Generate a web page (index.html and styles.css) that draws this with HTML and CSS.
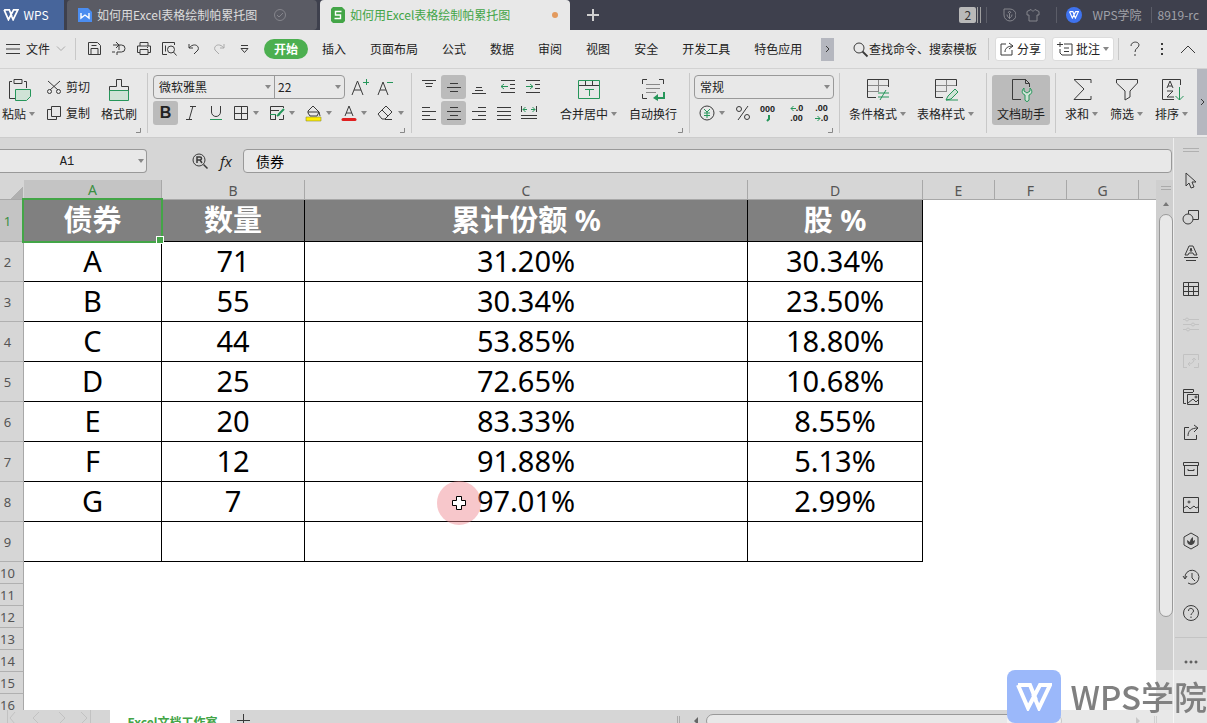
FILE: index.html
```
<!DOCTYPE html>
<html lang="zh-CN">
<head>
    <meta charset="UTF-8">
    <meta name="viewport" content="width=device-width, initial-scale=1.0">
    <title>如何用Excel表格绘制帕累托图</title>
    <link rel="stylesheet" href="styles.css">
</head>
<body>
    <svg class="sprite" aria-hidden="true">
        <symbol id="wps" viewBox="0 0 36 28">
            <path d="M2 2h12l6 15M2 2l10 23 12-23h10L23 25 17 11" />
        </symbol>
        <symbol id="corner" viewBox="0 0 5 5"><path d="M4.500 0v4.500H0" /></symbol>
    </svg>

    <div class="app">
        <header class="titlebar">
            <button class="home"><svg class="logo" width="16" height="12"><use href="#wps" /></svg>WPS</button>
            <button class="doc">
                <svg width="14" height="16" viewBox="0 0 14 16"><path d="M0 1h10l4 4v10H0z" fill="#4b8df0" stroke="none" /><path d="M3 6v5l4-3 4 3V6" fill="none" stroke="#fff" stroke-width="1.400" /></svg>
                <span>如何用Excel表格绘制帕累托图</span>
                <svg class="check" width="14" height="14" viewBox="0 0 14 14"><circle cx="7" cy="7" r="5.500" /><path d="M4 7l2 2 4-4" /></svg>
            </button>
            <button class="doc active">
                <svg width="14" height="16" viewBox="0 0 14 16"><path d="M2 0h9l3 3v11l-2 2H2l-2-2V2z" fill="#43a547" stroke="none" /><path d="M10.500 4.500h-6v3.500h5v3.500h-6" fill="none" stroke="#fff" stroke-width="1.400" /></svg>
                <span>如何用Excel表格绘制帕累托图</span>
                <i class="dot"></i>
            </button>
            <button class="new" aria-label="新建"><svg width="12" height="12" viewBox="0 0 12 12"><path d="M6 0v12M0 6h12" /></svg></button>
            <div class="account">
                <span class="count">2</span>
                <span class="stack"></span>
                <i class="line"></i>
                <svg class="gap-a" width="13" height="14" viewBox="0 0 13 14"><path d="M1 7V1h6a6 6 0 0 1 0 12 6 6 0 0 1-6-6M6.500 11V5M4 6.500c0 3 2.500 3 2.500 4 0-1 2.500-1 2.500-4M5 5l1.500-2L8 5" /></svg>
                <svg class="gap-b" width="14" height="14" viewBox="0 0 14 14"><path d="M5 1.500c1 2 3 2 4 0l4 2v3.500h-2v6H3V7H1V3.500z" /></svg>
                <i class="line"></i>
                <span class="avatar"><svg class="logo" width="10" height="8"><use href="#wps" /></svg></span>
                <span class="user">WPS学院</span>
                <i class="line"></i>
                <span class="version">8919-rc</span>
            </div>
        </header>

        <nav class="menubar">
            <button class="file"><svg width="14" height="12" viewBox="0 0 14 12"><path d="M0 1.500h14M0 6h14M0 10.500h14" /></svg><span>文件</span><svg class="pale" width="10" height="6" viewBox="0 0 10 6"><path d="M1 .5l4 4 4-4" /></svg></button>
            <i class="line"></i>
            <div class="quick">
                <button aria-label="保存"><svg width="16" height="16" viewBox="0 0 16 16"><path d="M2.500 1.500h9l3 3v9h-12zM5 13.500v-6h7v6M5.500 4.500h5" /></svg></button>
                <button aria-label="输出"><svg width="16" height="16" viewBox="0 0 16 16"><path d="M5 1l3 3-3 3M2 4h8.500a3.500 3.500 0 0 1 0 7H6v3M1 11h3M8 4v5" /></svg></button>
                <button aria-label="打印"><svg width="16" height="16" viewBox="0 0 16 16"><path d="M4 5V1.500h8V5M4 11.500H1.500V5h13v6.500H12M4 8.500h8v5H4zM11 6.500h1" /></svg></button>
                <button aria-label="预览"><svg width="16" height="16" viewBox="0 0 16 16"><path d="M6 13.500H1.500v-12h12V4M4.500 4.500v6" /><circle cx="10" cy="8.500" r="3.500" /><path d="M12.500 11l3 3.500" /></svg></button>
                <button aria-label="撤销"><svg width="16" height="16" viewBox="0 0 16 16"><path d="M3 3v4h4M3 7c5-6 11-2 9 2l-4 4" /></svg></button>
                <button aria-label="恢复"><svg class="pale" width="16" height="16" viewBox="0 0 16 16"><path d="M13 3v4H9M13 7C8 1 2 5 4 9l4 4" /></svg></button>
                <button aria-label="更多"><svg width="16" height="16" viewBox="0 0 16 16"><path d="M5 4.500h7M5 7.500l3.500 4L12 7.500z" /></svg></button>
            </div>
            <div class="tabs">
                <button class="current">开始</button>
                <button>插入</button>
                <button>页面布局</button>
                <button>公式</button>
                <button>数据</button>
                <button>审阅</button>
                <button>视图</button>
                <button>安全</button>
                <button>开发工具</button>
                <button>特色应用</button>
            </div>
            <button class="more" aria-label="更多选项卡"><svg width="5" height="8" viewBox="0 0 5 8"><path d="M1 1l3 3-3 3" /></svg></button>
            <div class="tools">
                <button class="find"><svg width="17" height="17" viewBox="0 0 17 17"><circle cx="7" cy="7" r="5" /><path d="M10.500 10.500l5 5" stroke-width="1.800" /></svg>查找命令、搜索模板</button>
                <i class="line"></i>
                <button class="box"><svg width="14" height="14" viewBox="0 0 14 14"><path d="M6 2H1v11h11V8M9 1l4 3-4 3M13 4C8 4 5 6 5 10" /></svg>分享</button>
                <button class="box"><svg width="16" height="14" viewBox="0 0 16 14"><path d="M7 2h8v11H5l-2-2V7M3 0v5M0 2.500h6M7 6h5M7 9.500h5" /></svg>批注<i class="caret"></i></button>
                <i class="line"></i>
                <button class="help" aria-label="帮助"><svg width="12" height="16" viewBox="0 0 12 16"><path d="M2 5c0-5 8-5 8-1 0 3-4 3-4 7M6 13v2" /></svg></button>
                <button class="dots" aria-label="菜单"><svg width="4" height="14" viewBox="0 0 4 14"><path d="M1 2h2M1 7h2M1 12h2" stroke-width="2" /></svg></button>
                <button class="fold" aria-label="收起"><svg width="16" height="9" viewBox="0 0 16 9"><path d="M1 8l7-7 7 7" /></svg></button>
            </div>
        </nav>

        <section class="ribbon">
            <div class="group clipboard">
                <button class="big paste"><svg width="24" height="24" viewBox="0 0 24 24"><path d="M5 3.500H2.500v17H8M17 3.500h2.500V10M7 1.500h8v4H7z" /><path class="green tint" d="M8.500 11.500h15v7l-4 4h-11z" /></svg><span>粘贴<i class="caret"></i></span></button>
                <div class="stackcol">
                    <button><svg width="16" height="16" viewBox="0 0 16 16"><path d="M2 2l10 9M14 2L4 11" /><circle cx="3.500" cy="12.500" r="2" /><circle cx="12.500" cy="12.500" r="2" /></svg>剪切</button>
                    <button><svg width="16" height="16" viewBox="0 0 16 16"><path d="M5.500 1.500h9v10h-9zM5 4.500H1.500v10h9V12" /></svg>复制</button>
                </div>
                <button class="big"><svg width="24" height="24" viewBox="0 0 24 24"><path class="green tint" d="M2.500 12.500h19v10h-19z" /><path d="M2.500 12.500v-4h7v-7h5v7h7v4" /></svg><span>格式刷</span></button>
                <svg class="corner" width="5" height="5"><use href="#corner" /></svg>
            </div>
            <div class="group font">
                <div class="row">
                    <div class="combo">
                        <span class="pick family"><select aria-label="字体"><option>微软雅黑</option></select><i class="caret"></i></span>
                        <span class="pick size"><select aria-label="字号"><option>22</option></select><i class="caret"></i></span>
                    </div>
                    <button class="ib" aria-label="增大字号"><svg width="20" height="18" viewBox="0 0 20 18"><path d="M2 17L7.500 3 13 17M4 12h7" /><path class="green" d="M13 4.500h6M16.500 1v6" /></svg></button>
                    <button class="ib" aria-label="减小字号"><svg width="20" height="18" viewBox="0 0 20 18"><path d="M3 17L8 4l5 13M5 12h6" /><path class="green" d="M12 4.500h6" /></svg></button>
                </div>
                <div class="row">
                    <button class="ib on" aria-label="加粗"><b>B</b></button>
                    <button class="ib" aria-label="倾斜"><svg width="12" height="16" viewBox="0 0 12 16"><path d="M5 1.500h6M1 14.500h6M8 1L4 15" /></svg></button>
                    <button class="ib" aria-label="下划线"><svg width="14" height="16" viewBox="0 0 14 16"><path d="M2.500 1v6a4.500 4.500 0 0 0 9 0V1" /><path class="green" d="M1 14.500h12" /></svg></button>
                    <button class="ic" aria-label="边框"><svg width="16" height="16" viewBox="0 0 16 16"><path d="M1.500 1.500h13v13h-13zM8.500 1v14M1 8.500h14" /></svg><i class="caret"></i></button>
                    <button class="ic" aria-label="样式"><svg width="16" height="16" viewBox="0 0 16 16"><path d="M14.500 3V1.500h-13v13H7M1 5.500h9M6.500 10v4M10 14.500h4.500V10" /><path class="green" d="M1 9.500h6" /><path class="green" d="M9 10l6-6M8 11l3-2" stroke-width="2" /></svg><i class="caret"></i></button>
                    <button class="ic" aria-label="填充颜色"><svg width="17" height="17" viewBox="0 0 17 17"><path d="M3 6l5-5 6 6-2 4H5L3 8zM3 7h11l1 4" /><path d="M1 12h15v4H1z" fill="#ffee00" stroke="#8b8b35" stroke-width=".6" /></svg><i class="caret"></i></button>
                    <button class="ic" aria-label="字体颜色"><svg width="16" height="17" viewBox="0 0 16 17"><path d="M4 11L8 1l4 10M5 8h6" /><path d="M2 14.500h12" stroke="#e02020" stroke-width="3" stroke-linecap="round" /></svg><i class="caret"></i></button>
                    <button class="ic" aria-label="清除"><svg width="17" height="16" viewBox="0 0 17 16"><path d="M1 9l8-8 6 6-7 7H5zM5 5l6 6M8 14.500h7" /></svg><i class="caret"></i></button>
                </div>
                <svg class="corner" width="5" height="5"><use href="#corner" /></svg>
            </div>
            <div class="group align">
                <div class="cols">
                    <div class="row">
                        <button class="ib" aria-label="顶端对齐"><svg width="16" height="16" viewBox="0 0 16 16"><path d="M1 1.500h14M4 4.500h8M5 7.500h6" /></svg></button>
                        <button class="ib on" aria-label="垂直居中"><svg width="16" height="16" viewBox="0 0 16 16"><path d="M4 4.500h8M1 8.500h14M4 12.500h8" /></svg></button>
                        <button class="ib" aria-label="底端对齐"><svg width="16" height="16" viewBox="0 0 16 16"><path d="M5 8.500h6M4 11.500h8M1 14.500h14" /></svg></button>
                        <button class="ib wide" aria-label="减少缩进"><svg width="16" height="16" viewBox="0 0 16 16"><path d="M1 1.500h14M10 5.500h5M10 9.500h5M1 13.500h14" /><path class="green" d="M8 7.500H1M4 5L1 7.500 4 10" /></svg></button>
                        <button class="ib" aria-label="增加缩进"><svg width="16" height="16" viewBox="0 0 16 16"><path d="M1 1.500h14M10 5.500h5M10 9.500h5M1 13.500h14" /><path class="green" d="M1 7.500h7M5 5l3 2.500L5 10" /></svg></button>
                    </div>
                    <div class="row">
                        <button class="ib" aria-label="左对齐"><svg width="16" height="16" viewBox="0 0 16 16"><path d="M1 2.500h8M1 6.500h14M1 10.500h8M1 14.500h14" /></svg></button>
                        <button class="ib on" aria-label="居中"><svg width="16" height="16" viewBox="0 0 16 16"><path d="M4 2.500h8M1 6.500h14M4 10.500h8M1 14.500h14" /></svg></button>
                        <button class="ib" aria-label="右对齐"><svg width="16" height="16" viewBox="0 0 16 16"><path d="M7 2.500h8M1 6.500h14M7 10.500h8M1 14.500h14" /></svg></button>
                        <button class="ib" aria-label="两端对齐"><svg width="16" height="16" viewBox="0 0 16 16"><path d="M1 2.500h14M1 6.500h14M1 10.500h14M1 14.500h14" /></svg></button>
                        <button class="ib" aria-label="分散对齐"><svg width="18" height="16" viewBox="0 0 18 16"><path d="M1.500 1v6M16.500 1v6M1 10.500h16M1 13.500h16" /><path class="green" d="M3 4.500h4M5.500 2L3 4.500 5.500 7M11 4.500h4M12.500 2L15 4.500 12.500 7" /></svg></button>
                    </div>
                </div>
                <button class="big"><svg width="24" height="24" viewBox="0 0 24 24"><path class="green" d="M1.500 2.500h21v18h-21zM8 11.500h9M12.500 12v6" /><path d="M2 7.500h20M8.500 3v4M15.500 3v4" /></svg><span>合并居中<i class="caret"></i></span></button>
                <button class="big"><svg width="24" height="24" viewBox="0 0 24 24"><path d="M1.500 6V1.500H6M18 1.500h4.500V6M1.500 16v4.500H6" /><path class="grey" d="M5 6.500h14M5 10.500h14M5 14.500h10" /><path class="green" d="M23 14v6h-8" stroke-width="2" /><path d="M17 16v7l-5-3z" fill="#26965a" stroke="none" /></svg><span>自动换行</span></button>
                <svg class="corner" width="5" height="5"><use href="#corner" /></svg>
            </div>
            <div class="group number">
                <div class="row">
                    <div class="combo"><span class="pick"><select aria-label="数字格式"><option>常规</option></select><i class="caret"></i></span></div>
                </div>
                <div class="row">
                    <button class="ic" aria-label="货币"><svg width="16" height="16" viewBox="0 0 16 16"><circle cx="8" cy="8" r="7" /><path class="green" d="M5 4l3 3 3-3M5 8h6M5 10.500h6M8 7v6" /></svg><i class="caret"></i></button>
                    <button class="ib" aria-label="百分比"><svg width="16" height="16" viewBox="0 0 16 16"><circle cx="4" cy="4" r="2.500" /><circle cx="12" cy="12" r="2.500" /><path d="M13 1L3 15" /></svg></button>
                    <button class="ib digits" aria-label="千位分隔"><span>000</span><svg width="6" height="7" viewBox="0 0 6 7"><path class="green" d="M4 0v4L2 6" stroke-width="2" /></svg></button>
                    <button class="ib digits wide"><span><svg width="6" height="7" viewBox="0 0 6 7"><path class="green" d="M6 3.500H1M3.500 1L1 3.500 3.500 6" /></svg>.0</span><span>.00</span></button>
                    <button class="ib digits"><span>.00</span><span><svg width="6" height="7" viewBox="0 0 6 7"><path class="green" d="M0 3.500h5M2.500 1L5 3.500 2.500 6" /></svg>.0</span></button>
                </div>
                <svg class="corner" width="5" height="5"><use href="#corner" /></svg>
            </div>
            <div class="group styles">
                <button class="big"><svg width="24" height="24" viewBox="0 0 24 24"><path d="M10 19.500H1.500v-18h21V9" /><path d="M2 7.500h20M12.500 2v11M2 13.500h11" class="grey" /><path class="green" d="M12 15h11M12 19h11M20 12l-6 10" /></svg><span>条件格式<i class="caret"></i></span></button>
                <button class="big"><svg width="24" height="24" viewBox="0 0 24 24"><path d="M9 19.500H1.500v-18h21V8" /><path d="M2 7.500h20M12.500 2v11M2 13.500h11" class="grey" /><path class="green tint" d="M12 22l2-4 7-7 3 3-7 7z" /><path class="green" d="M12 22h12" /></svg><span>表格样式<i class="caret"></i></span></button>
            </div>
            <div class="group helper">
                <button class="big on"><svg width="24" height="24" viewBox="0 0 24 24"><path d="M12 21.500H3.500v-20h13l4 4V9M16.500 1v4.500h4" /><path class="green tint" d="M15 10v3l3 2 3-2v-3c3 3 2 6-1 7v5c-1 2-3 2-4 0v-5c-3-1-4-4-1-7z" /></svg><span>文档助手</span></button>
            </div>
            <div class="group edit">
                <button class="big"><svg width="24" height="24" viewBox="0 0 24 24"><path d="M21 5V1.500H4L14 11 4 21.500h17V18" /></svg><span>求和<i class="caret"></i></span></button>
                <button class="big"><svg width="24" height="24" viewBox="0 0 24 24"><path d="M1.500 1.500h21V5L15 13v6l-5 3v-9L1.500 5z" /></svg><span>筛选<i class="caret"></i></span></button>
                <button class="big"><svg width="24" height="24" viewBox="0 0 24 24"><path d="M14 21.500H2.500v-20h18V7M7 10l3-7 3 7M8 8h4M7 13h6l-6 6h7" /><path class="green" d="M19.500 9v13M15.500 18l4 4 4-4" /></svg><span>排序<i class="caret"></i></span></button>
            </div>
            <button class="scroll" aria-label="向右滚动"><svg width="5" height="8" viewBox="0 0 5 8"><path d="M1 1l3 3-3 3" /></svg></button>
        </section>

        <div class="work">
            <main class="book">
                <div class="formulabar">
                    <div class="namebox"><input type="text" value="A1" aria-label="名称框"><i class="caret"></i></div>
                    <button class="lens" aria-label="查找"><svg width="17" height="17" viewBox="0 0 17 17"><circle cx="7" cy="7" r="6" /><path d="M5 10V4h3a1.500 1.500 0 0 1 0 3H5M8 7l2 3M11.500 11.500l4 4" stroke-width="1.500" /></svg></button>
                    <button class="fx">fx</button>
                    <input class="formula" type="text" value="债券" aria-label="编辑栏">
                </div>
                <div class="grid">
                    <div class="sheet">
                        <table>
                            <colgroup><col class="c-num"><col class="c-a"><col class="c-b"><col class="c-c"><col class="c-d"><col class="c-e"><col class="c-e"><col class="c-e"><col></colgroup>
                            <thead>
                                <tr><th class="all"></th><th class="sel">A</th><th>B</th><th>C</th><th>D</th><th>E</th><th>F</th><th>G</th><th></th></tr>
                            </thead>
                            <tbody>
                                <tr class="title"><th class="sel">1</th><td class="cursor">债券</td><td>数量</td><td>累计份额 %</td><td>股 %</td></tr>
                                <tr class="data"><th>2</th><td>A</td><td>71</td><td>31.20%</td><td>30.34%</td></tr>
                                <tr class="data"><th>3</th><td>B</td><td>55</td><td>30.34%</td><td>23.50%</td></tr>
                                <tr class="data"><th>4</th><td>C</td><td>44</td><td>53.85%</td><td>18.80%</td></tr>
                                <tr class="data"><th>5</th><td>D</td><td>25</td><td>72.65%</td><td>10.68%</td></tr>
                                <tr class="data"><th>6</th><td>E</td><td>20</td><td>83.33%</td><td>8.55%</td></tr>
                                <tr class="data"><th>7</th><td>F</td><td>12</td><td>91.88%</td><td>5.13%</td></tr>
                                <tr class="data"><th>8</th><td>G</td><td>7</td><td class="pointed">97.01%<span class="pointer"><svg width="16" height="16" viewBox="0 0 16 16"><path d="M5.500 1.500h5v4h4v5h-4v4h-5v-4h-4v-5h4z" /></svg></span></td><td>2.99%</td></tr>
                                <tr class="data"><th>9</th><td></td><td></td><td></td><td></td></tr>
                                <tr><th>10</th></tr>
                                <tr><th>11</th></tr>
                                <tr><th>12</th></tr>
                                <tr><th>13</th></tr>
                                <tr><th>14</th></tr>
                                <tr><th>15</th></tr>
                                <tr><th>16</th></tr>
                            </tbody>
                        </table>
                    </div>
                    <div class="vscroll">
                        <i class="split"></i>
                        <i class="up"></i>
                        <i class="thumb"></i>
                    </div>
                </div>
                <footer class="sheetbar">
                    <div class="pager"><svg width="92" height="14" viewBox="0 0 92 14"><path d="M7.500 0v14M15 2l-5 6 5 6M39 2l-6 6 6 6M59 2l6 6-6 6M81 2l6 6-6 6M90.500 0v14" /></svg></div>
                    <button class="sheettab">Excel文档工作室</button>
                    <button class="add" aria-label="新建工作表"><svg width="13" height="13" viewBox="0 0 13 13"><path d="M6.500 0v13M0 6.500h13" /></svg></button>
                    <div class="hscroll"><i class="grip"></i><i class="left"></i><i class="bar"></i><i class="right"></i><i class="grip"></i></div>
                </footer>
            </main>

            <aside class="side">
                <i class="handle"></i>
                <button aria-label="选择"><svg width="18" height="18" viewBox="0 0 18 18"><path d="M4 1v13l3-3 2 5 3-1-2-5h4z" /></svg></button>
                <button aria-label="形状"><svg width="18" height="18" viewBox="0 0 18 18"><circle cx="6" cy="11" r="5" /><path d="M6.500 6V2.500h10v9H11" /></svg></button>
                <button aria-label="艺术字"><svg width="18" height="18" viewBox="0 0 18 18"><path d="M3 11L7 2h4l4 9h-3l-1-2H7l-1 2zM8 7l1-3 1 3zM2 13.500h14M4 16.500h10" /></svg></button>
                <button aria-label="表格"><svg width="18" height="18" viewBox="0 0 18 18"><path d="M1.500 2.500h15v13h-15zM1 6.500h16M1 11.500h16M6.500 2v14M11.500 7v9" /></svg></button>
                <button class="off" aria-label="属性"><svg width="18" height="18" viewBox="0 0 18 18"><path d="M1 3.500h2M7 3.500h10M1 8.500h8M13 8.500h4M1 13.500h3M8 13.500h9" /><circle cx="5" cy="3.500" r="1.500" /><circle cx="11" cy="8.500" r="1.500" /><circle cx="6" cy="13.500" r="1.500" /></svg></button>
                <button class="off" aria-label="分析"><svg width="18" height="18" viewBox="0 0 18 18"><path d="M1.500 16V2.500h15V8M6 12c4 0 6-2 6-5M10 8l2-2 2 2M8 10l-2 2 2 2M12 15.500h4.500V11M1 15.500h4" /></svg></button>
                <button aria-label="图片库"><svg width="18" height="18" viewBox="0 0 18 18"><path d="M4 15.500H1.500v-14h10V4M1 4.500h10M5.500 6.500h11v10h-11zM6 15l5-4 3 3 2-2" /><circle cx="14" cy="9" r="1" /></svg></button>
                <button aria-label="分享"><svg width="18" height="18" viewBox="0 0 18 18"><path d="M7 3.500H2.500v12h12V11M12 1l4 3-4 4M16 4C9 4 6 7 6 12" /></svg></button>
                <button aria-label="归档"><svg width="18" height="18" viewBox="0 0 18 18"><path d="M1.500 2.500h15v3h-15zM2.500 6v9.500h13V6M6 9v1.500h6V9" /></svg></button>
                <button aria-label="图片"><svg width="18" height="18" viewBox="0 0 18 18"><path d="M1.500 1.500h15v15h-15zM2 12l3-2 3 3 4-3 2 2 2-1" /><circle cx="7" cy="6" r="1" /></svg></button>
                <button aria-label="云文档"><svg width="18" height="18" viewBox="0 0 18 18"><path d="M9 1l7 4v8l-7 4-7-4V5z" /><path d="M8.500 13C6 12.500 5 11 5 8l3 2c0-2 1-4 3-5v4l2-1c0 3-2 5-4.500 5z" fill="#444" stroke="none" /></svg></button>
                <button aria-label="历史"><svg width="18" height="18" viewBox="0 0 18 18"><path d="M3 10a7 7 0 1 1 3 5M1 8l2 3 2-3M10 5v5l3 3" /></svg></button>
                <button aria-label="帮助"><svg width="18" height="18" viewBox="0 0 18 18"><circle cx="9" cy="9" r="7.500" /><path d="M6.500 7c0-4 5-3 5 0 0 2-2.500 2-2.500 4M9 12.500V14" /></svg></button>
                <button class="last" aria-label="更多"><svg width="14" height="4" viewBox="0 0 14 4"><circle cx="2" cy="2" r="1" /><circle cx="7" cy="2" r="1" /><circle cx="12" cy="2" r="1" /></svg></button>
            </aside>
        </div>
    </div>

    <div class="watermark"><span class="mark"><svg class="logo" width="36" height="28"><use href="#wps" /></svg></span>WPS学院</div>
</body>
</html>
```
FILE: styles.css
```
:root {
    --bar: #e8e8e8;
    --panel: #d6d6d6;
    --pressed: #bbbbbb;
    --line: #c8c8c8;
    --border: #999999;
    --text: #222222;
    --green: #43a547;
    --icon-green: #26965a;
}

* {
    box-sizing: border-box;
    margin: 0;
    padding: 0;
}

body {
    font-family: "Noto Sans CJK SC", sans-serif;
    font-size: 12px;
    line-height: 16px;
    color: var(--text);
    overflow: hidden;
}

button, input, select {
    font: inherit;
    color: inherit;
    background: none;
    border: none;
    border-radius: 0;
    outline: none;
}

button {
    display: flex;
    align-items: center;
    justify-content: center;
    flex: none;
    white-space: nowrap;
}

svg {
    display: block;
    flex: none;
    fill: none;
    stroke: #3a3a3a;
}

.sprite {
    position: absolute;
    width: 0;
    height: 0;
}

.logo {
    stroke: #ffffff;
    stroke-width: 4;
}

.green { stroke: var(--icon-green); }
.tint { fill: #cfe3d6; }
.grey { stroke: #888888; }
.pale { stroke: #aaaaaa; }

.caret {
    flex: none;
    border: 3px solid transparent;
    border-top: 4px solid #888888;
    border-bottom: 0;
}

.line {
    flex: none;
    width: 1px;
    height: 22px;
    background: var(--line);
}

.app {
    display: flex;
    flex-direction: column;
    height: 100vh;
    background: var(--panel);
}

/* title bar */
.titlebar {
    display: flex;
    flex: none;
    height: 30px;
    background: #3e404d;
    color: #dddddd;
}

.home {
    width: 64px;
    gap: 4px;
    padding-right: 12px;
    background: #47659b;
    color: #ffffff;
}

.doc {
    width: 250px;
    margin-left: 3px;
    padding: 0 12px 0 11px;
    gap: 5px;
    justify-content: flex-start;
    background: #5a5b64;
    border-radius: 4px 4px 4px 0;
}

.doc.active {
    background: var(--bar);
    color: var(--green);
    border-radius: 4px 4px 0 0;
}

.check {
    margin-left: 11px;
    stroke: #85858c;
}

.dot {
    width: 6px;
    height: 6px;
    margin-left: auto;
    border-radius: 50%;
    background: #e39a5e;
}

.new {
    width: 46px;
}

.new svg {
    stroke: #d0d0d0;
    stroke-width: 2;
}

.account {
    display: flex;
    align-items: center;
    margin-left: auto;
    padding-right: 8px;
    color: #a0a1a8;
}

.account svg { stroke: #85868d; }
.account .logo { stroke: #ffffff; }
.account .line { height: 16px; background: #5b5d68; }

.count {
    width: 17px;
    border-radius: 2px;
    background: #b9b9b9;
    color: #333333;
    text-align: center;
}

.stack {
    width: 4px;
    height: 16px;
    margin: 0 5px 0 1px;
    border: solid #a0a0a0;
    border-width: 0 1px;
}

.gap-a { margin: 0 10px 0 16px; }
.gap-b { margin-right: 16px; }

.avatar {
    display: grid;
    place-items: center;
    width: 16px;
    height: 16px;
    margin: 0 10px 0 9px;
    border-radius: 50%;
    background: #3f73ee;
}

.user { margin-right: 9px; }
.version { margin-left: 6px; }

/* menu bar */
.menubar {
    display: flex;
    flex: none;
    align-items: center;
    height: 39px;
    padding-left: 6px;
    background: var(--bar);
    border-bottom: 1px solid #d2d2d2;
}

.file {
    gap: 6px;
    margin-right: 9px;
}

.quick {
    display: flex;
    margin-left: 5px;
}

.quick button {
    width: 25px;
    height: 24px;
}

.tabs {
    display: flex;
    margin-left: 6px;
}

.tabs button {
    height: 20px;
    padding: 0 12px;
}

.tabs .current {
    margin: 0 2px;
    padding: 0 10px;
    border-radius: 10px;
    background: #4caf50;
    color: #ffffff;
    font-weight: bold;
}

.more {
    width: 13px;
    height: 23px;
    margin-left: 7px;
    background: #b5b7bf;
}

.tools {
    display: flex;
    align-items: center;
    margin-left: auto;
    padding-right: 11px;
}

.find { margin-right: 11px; }

.box {
    height: 24px;
    margin-left: 6px;
    padding: 0 4px;
    gap: 3px;
    border: 1px solid #dcdcdc;
    border-radius: 3px;
    background: #ffffff;
}

.box + .line { margin-left: 4px; }
.help { width: 32px; }
.dots { width: 22px; }
.fold { margin-left: 7px; }

/* ribbon */
.ribbon {
    display: flex;
    flex: none;
    height: 68px;
    background: var(--bar);
}

.group {
    position: relative;
    display: flex;
    flex: none;
    padding: 6px 5px 0 5px;
}

.group + .group::before {
    content: "";
    position: absolute;
    left: 0;
    top: 4px;
    width: 1px;
    height: 60px;
    background: var(--line);
}

.corner {
    position: absolute;
    right: 6px;
    bottom: 4px;
    stroke: #888888;
}

.big {
    flex-direction: column;
    gap: 4px;
    height: 50px;
    border-radius: 3px;
}

.big span {
    display: flex;
    align-items: center;
    gap: 3px;
}

.on {
    background: var(--pressed);
    border-radius: 3px;
}

.row {
    display: flex;
    align-items: center;
    height: 24px;
}

.ib {
    width: 25px;
    height: 24px;
}

.ic {
    width: 36px;
    height: 24px;
    gap: 4px;
}

.ib b {
    font-family: "Liberation Sans", sans-serif;
    font-size: 16px;
}

.ib.wide { margin-left: 4px; }

.clipboard {
    width: 147px;
    padding-left: 2px;
    gap: 11px;
}

.stackcol {
    display: grid;
    align-content: start;
    gap: 2px;
}

.stackcol button {
    height: 24px;
    gap: 4px;
}

.font, .number, .cols {
    display: flex;
    flex-direction: column;
    gap: 2px;
}

.font {
    width: 264px;
    padding-left: 6px;
}

.combo {
    display: flex;
    height: 24px;
    margin-right: 2px;
    border: 1px solid var(--border);
    border-radius: 4px;
}

.pick {
    display: flex;
    align-items: center;
    flex: 1;
    padding-right: 3px;
}

.pick select {
    flex: 1;
    min-width: 0;
    height: 100%;
    padding-left: 5px;
    appearance: none;
}

.family {
    flex: none;
    width: 121px;
    border-right: 1px solid var(--border);
}

.size {
    flex: none;
    width: 69px;
}

.size select { padding-left: 3px; }

.align {
    width: 278px;
    gap: 12px;
}

.align .row .ib:last-child { margin-right: 3px; }
.number { width: 150px; }
.number .combo { width: 140px; margin: 0; }

.digits {
    flex-direction: column;
    gap: 1px;
    font-family: "Liberation Sans", sans-serif;
    font-size: 9px;
    line-height: 9px;
    font-weight: bold;
}

.digits span {
    display: flex;
    align-items: center;
}

.styles {
    width: 147px;
    padding-left: 10px;
    gap: 11px;
}

.helper { width: 69px; padding-left: 6px; }
.helper .big { width: 58px; }

.edit {
    padding-left: 10px;
    gap: 12px;
}

.scroll {
    width: 10px;
    height: 66px;
    margin-left: auto;
    background: #b5b7bf;
}

/* workbook */
.work {
    display: flex;
    flex: 1;
    min-height: 0;
    border-top: 1px solid #cccccc;
}

.book {
    display: flex;
    flex: 1;
    flex-direction: column;
    min-width: 0;
}

.formulabar {
    display: flex;
    flex: none;
    align-items: center;
    height: 42px;
    padding: 4px 1px 0 0;
}

.namebox {
    display: flex;
    align-items: center;
    width: 147px;
    height: 24px;
    padding-right: 2px;
    border: 1px solid var(--border);
    border-left: 0;
    border-radius: 0 4px 4px 0;
    background: var(--bar);
}

.namebox input {
    flex: 1;
    min-width: 0;
    padding: 2px 4px 0 0;
    text-align: center;
    font-family: "Liberation Mono", monospace;
}

.lens { margin-left: 45px; }

.fx {
    width: 34px;
    font-family: "Open Sans", sans-serif;
    font-size: 15px;
    font-style: italic;
}

.formula {
    flex: 1;
    min-width: 0;
    height: 24px;
    padding-left: 12px;
    border: 1px solid var(--border);
    border-radius: 4px;
    background: var(--bar);
    color: #000000;
    font-size: 14px;
}

.grid {
    display: flex;
    flex: 1;
    min-height: 0;
}

.sheet {
    flex: 1;
    min-width: 0;
    overflow: hidden;
    background: #ffffff;
}

table {
    width: 100%;
    table-layout: fixed;
    border-spacing: 0;
}

.c-num { width: 24px; }
.c-a { width: 138px; }
.c-b { width: 143px; }
.c-c { width: 443px; }
.c-d { width: 175px; }
.c-e { width: 72px; }

th {
    height: 22px;
    padding-right: 8px;
    border-right: 1px solid #a8a8a8;
    border-bottom: 1px solid #b0b0b0;
    background: var(--panel);
    color: #555555;
    font-family: "Noto Sans", sans-serif;
    font-size: 13px;
    font-weight: normal;
    line-height: 16px;
}

thead th {
    height: 20px;
    padding: 2px 0 0;
    border-color: #a8a8a8;
    font-size: 14px;
}

thead th:last-child { border-right: 0; }

th.sel {
    background: #c4c4c4;
    color: #3a8f42;
}

thead th.sel { border-bottom: 2px solid var(--green); }

.all {
    background: linear-gradient(135deg, var(--panel) 70%, #b0b0b0 70%);
    border-right-color: var(--panel);
}

td {
    padding-bottom: 2px;
    border: solid #000000;
    border-width: 0 1px 1px 0;
    color: #000000;
    text-align: center;
    font-family: "Noto Sans", "Noto Sans CJK SC", sans-serif;
    font-size: 29px;
    line-height: 36px;
}

.title td {
    height: 42px;
    background: #808080;
    color: #ffffff;
    font-weight: bold;
}

.data td { height: 40px; }

.cursor, .pointed { position: relative; }

.cursor::before {
    content: "";
    position: absolute;
    inset: -2px;
    border: 2px solid var(--green);
}

.cursor::after {
    content: "";
    position: absolute;
    right: -3px;
    bottom: -3px;
    width: 6px;
    height: 6px;
    border: 1px solid #ffffff;
    background: var(--green);
}

.pointer {
    position: absolute;
    left: 132px;
    top: -1px;
    display: grid;
    place-items: center;
    width: 44px;
    height: 44px;
    border-radius: 50%;
    background: rgba(238, 130, 140, 0.45);
}

.pointer svg {
    fill: #ffffff;
    stroke: #000000;
}

.vscroll {
    display: flex;
    flex: none;
    flex-direction: column;
    align-items: center;
    width: 17px;
    padding-left: 3px;
    background: #cfcfcf;
}

.split {
    width: 10px;
    height: 4px;
    margin: 6px 0 12px;
    border: solid #aaaaaa;
    border-width: 1px 0;
}

.up {
    border: 3px solid transparent;
    border-top: 0;
    border-bottom: 4px solid #777777;
}

.thumb {
    width: 14px;
    height: 76%;
    margin-top: 8px;
    border: 1px solid var(--border);
    border-radius: 7px;
    background: var(--bar);
}

.sheetbar {
    display: flex;
    flex: none;
    align-items: flex-start;
    height: 13px;
    overflow: hidden;
}

.pager {
    width: 110px;
}

.pager svg { stroke: #c2c2c2; }

.sheettab {
    width: 120px;
    height: 24px;
    padding-left: 5px;
    background: #ffffff;
    color: var(--green);
    font-weight: bold;
}

.add { margin: 4px 0 0 7px; }

.hscroll {
    display: flex;
    flex: none;
    width: 43%;
    height: 18px;
    margin-left: auto;
    padding: 4px 16px 0 8px;
}

.grip {
    width: 3px;
    height: 14px;
    margin: 2px 14px 0 0;
    border: solid #aaaaaa;
    border-width: 0 1px;
}

.grip:last-child { margin-right: 0; }

.left, .right {
    height: 8px;
    margin: 3px 8px 0 0;
    border: 4px solid transparent;
    border-left: 0;
    border-right: 4px solid #666666;
}

.right {
    margin-right: 14px;
    border-right: 0;
    border-left: 4px solid #999999;
}

.bar {
    flex: 1;
    height: 14px;
    margin-right: 74px;
    border: 1px solid var(--border);
    border-radius: 7px;
    background: var(--bar);
}

/* side panel */
.side {
    display: flex;
    flex: none;
    flex-direction: column;
    align-items: center;
    width: 34px;
    border-left: 1px solid #eeeeee;
    overflow: hidden;
}

.side button {
    width: 32px;
    height: 36px;
}

.side .off svg { stroke: #c2c2c2; }

.side .last {
    height: 48px;
    margin-top: 6px;
    border-top: 1px solid #c4c4c4;
}

.handle {
    flex: none;
    width: 16px;
    height: 4px;
    margin: 10px 0 11px;
    border: solid #b0b0b0;
    border-width: 1px 0;
}

.watermark {
    position: fixed;
    right: 0;
    bottom: 0;
    display: flex;
    align-items: center;
    gap: 9px;
    height: 53px;
    background: rgba(255, 255, 255, 0.45);
    color: #808080;
    font-size: 33px;
    font-weight: 500;
    line-height: 53px;
    white-space: nowrap;
}

.mark {
    display: grid;
    place-items: center;
    width: 54px;
    height: 53px;
    border-radius: 8px;
    background: #9bb8fa;
}
```
